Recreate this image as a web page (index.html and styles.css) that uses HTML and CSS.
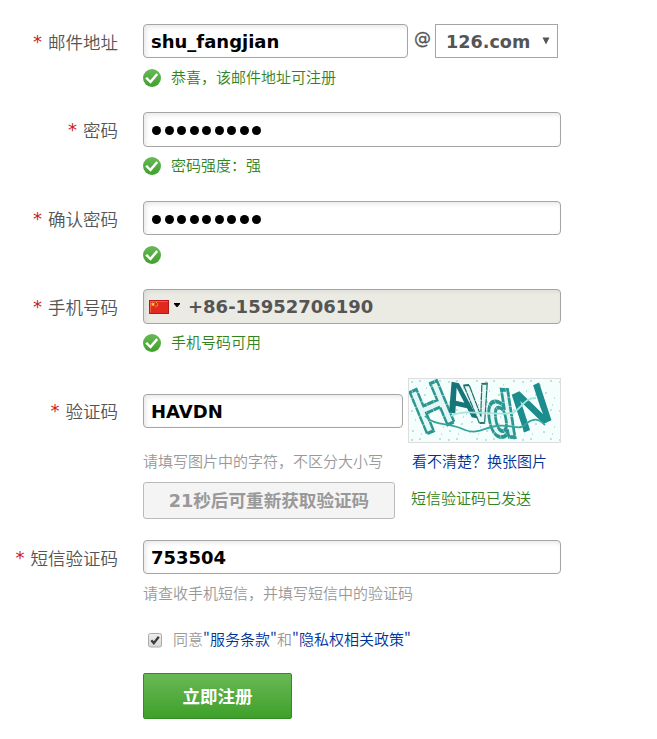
FILE: index.html
```html
<!DOCTYPE html>
<html lang="zh-CN">
<head>
<meta charset="utf-8">
<title>注册</title>
<link rel="stylesheet" href="styles.css">
</head>
<body>
<svg width="0" height="0" class="defs" aria-hidden="true">
  <defs>
    <linearGradient id="ok-fill" x1="0" y1="0" x2="0" y2="1"><stop offset="0" stop-color="#68b957"/><stop offset="1" stop-color="#40a02c"/></linearGradient>
    <symbol id="ok" viewBox="0 0 18 18"><circle cx="9" cy="9" r="9" fill="url(#ok-fill)"/><path d="M2.2 9.6 4.2 7.9 7.2 11.2 13.3 4.3 15.2 5.7 7.6 14.7Z" fill="#fff"/></symbol>
  </defs>
</svg>
<form class="form">
  <div class="row">
    <div class="label"><i>*</i><span>邮件地址</span></div>
    <div class="content">
      <div class="line"><div class="field mail"><span class="value">shu_fangjian</span></div><span class="at">@</span><div class="domain"><span class="value">126.com</span><svg class="arrow" viewBox="0 0 7 8"><path d="M0 .5h7L3.5 7.5Z"/></svg></div></div>
      <div class="hint ok"><svg class="tick"><use href="#ok"/></svg><span>恭喜，该邮件地址可注册</span></div>
    </div>
  </div>
  <div class="row password">
    <div class="label"><i>*</i><span>密码</span></div>
    <div class="content">
      <div class="field"><span class="dots"><b></b><b></b><b></b><b></b><b></b><b></b><b></b><b></b><b></b></span></div>
      <div class="hint ok"><svg class="tick"><use href="#ok"/></svg><span>密码强度：强</span></div>
    </div>
  </div>
  <div class="row confirm">
    <div class="label"><i>*</i><span>确认密码</span></div>
    <div class="content">
      <div class="field"><span class="dots"><b></b><b></b><b></b><b></b><b></b><b></b><b></b><b></b><b></b></span></div>
      <div class="hint ok"><svg class="tick"><use href="#ok"/></svg></div>
    </div>
  </div>
  <div class="row phone">
    <div class="label"><i>*</i><span>手机号码</span></div>
    <div class="content">
      <div class="field tel">
        <svg class="flag" viewBox="0 0 20 14"><rect x=".5" y=".5" width="19" height="13" fill="#e02a20" stroke="#b81818"/><path d="M1.5 1.5h17M1.5 1.5v11" stroke="#f45b46" fill="none"/><path d="M4 2 4.7 3.5 6.3 3.6 5.1 4.6 5.5 6.2 4 5.3 2.5 6.2 2.9 4.6 1.7 3.6 3.3 3.5Z" fill="#ffd735"/><path d="M7 2h1v1H7zM8.2 3.5h1v1h-1zM7.8 5h1v1h-1zM6.5 6.2h1v1h-1z" fill="#f8b52f"/></svg>
        <svg class="caret" viewBox="0 0 6 4"><path d="M0 0h6v1L3.5 4h-1L0 1Z"/></svg>
        <span class="value">+86-15952706190</span>
      </div>
      <div class="hint ok"><svg class="tick"><use href="#ok"/></svg><span>手机号码可用</span></div>
    </div>
  </div>
  <div class="row captcha-row">
    <div class="label"><i>*</i><span>验证码</span></div>
    <div class="content">
      <div class="line captcha-line">
        <div class="field code"><span class="value">HAVDN</span></div>
        <svg class="captcha" viewBox="0 0 153 65">
          <defs>
            <pattern id="specks" width="37" height="29" patternUnits="userSpaceOnUse"><path d="M3 4h2M12 2v2M21 7h1M31 3h2M7 13h1M16 17h2M27 14v2M35 20h1M4 24h2M13 27h1M24 25h2M33 27h1M18 10h1" stroke="#8fc4bf" stroke-width="1"/></pattern>
            <filter id="soft"><feGaussianBlur stdDeviation=".5"/></filter>
          </defs>
          <rect width="153" height="65" fill="#f3fefd"/>
          <rect width="153" height="65" fill="url(#specks)"/>
          <g filter="url(#soft)" class="glyphs">
            <text class="hollow" transform="matrix(.92 -.4 .5 1.2 16 57)">H</text>
            <text class="solid dark" transform="matrix(.86 .19 .24 .96 40 34)">A</text>
            <text class="hollow dark-line" transform="matrix(.72 -.06 .19 1.12 62 46)">V</text>
            <text class="hollow wide" transform="matrix(.92 .04 .2 1.3 82 58)">d</text>
            <text class="solid" transform="matrix(.93 -.42 .36 1.1 113 56)">N</text>
            <path class="thread" d="M17 38C27 49 43 44 57 52c13 5 20-3 32-4 15-2 23 6 30-3 8-6 13-3 18 2"/>
            <path class="thread pale" d="M43 38c15-8 35 0 62-3 11-7 11-15 23-15"/>
          </g>
          <rect x=".5" y=".5" width="152" height="64" fill="none" stroke="#ddd"/>
        </svg>
      </div>
      <div class="captcha-help"><span>请填写图片中的字符，不区分大小写</span><a>看不清楚？换张图片</a></div>
      <div class="sms-line"><div class="resend"><span>21秒后可重新获取验证码</span></div><span class="sent">短信验证码已发送</span></div>
    </div>
  </div>
  <div class="row sms">
    <div class="label"><i>*</i><span>短信验证码</span></div>
    <div class="content">
      <div class="field"><span class="value">753504</span></div>
      <div class="hint">请查收手机短信，并填写短信中的验证码</div>
    </div>
  </div>
  <div class="agreement"><svg class="check" viewBox="0 0 14 15"><defs><linearGradient id="box" x1="0" y1="0" x2="0" y2="1"><stop offset="0" stop-color="#eee"/><stop offset="1" stop-color="#d8d8d8"/></linearGradient></defs><rect x=".5" y=".5" width="13" height="13.5" rx="2" fill="url(#box)" stroke="#aaa"/><path d="m3.3 7.3 2.5 2.8L10.8 3.8" fill="none" stroke="#3c3c3c" stroke-width="2.3"/></svg><span>同意<a><q>"</q>服务条款<q>"</q></a>和<a><q>"</q>隐私权相关政策<q>"</q></a></span></div>
  <button class="submit" type="button"><span>立即注册</span></button>
</form>
</body>
</html>
```
FILE: styles.css
```css
* { box-sizing: border-box; }
body { margin: 0; background: #fff; color: #555; font: 350 15px/20px "Noto Sans CJK SC", sans-serif; }
.defs { display: block; }
svg { display: block; flex: none; }
.form { padding-top: 24px; }
.row { display: grid; grid-template-columns: 118px 418px; column-gap: 25px; height: 88px; }
.confirm { height: 88px; }
.password, .phone { height: 89px; }
.label { display: flex; justify-content: flex-end; gap: 6px; height: 36px; font-size: 17.5px; line-height: 36px; white-space: nowrap; }
.label i { color: #c8201c; font: 18px/36px "DejaVu Sans", sans-serif; }
.field { display: flex; align-items: center; width: 418px; height: 34px; padding: 0 7px; border: 1px solid #a5a5a5; border-radius: 4px; background: #fff; box-shadow: inset 2px 2px 5px #e8e8e8; color: #000; }
.password .field, .phone .field { height: 35px; }
.value { font: bold 18px/30px "DejaVu Sans", sans-serif; white-space: nowrap; }
.field .value { padding-top: 1px; }
.line { display: flex; }
.mail { width: 265px; }
.at { width: 27px; padding-left: 6px; font: 17px/29px "DejaVu Sans", sans-serif; -webkit-text-stroke: .3px #555; }
.domain { display: flex; align-items: center; justify-content: space-between; width: 123px; height: 34px; padding: 0 7px 0 10px; border: 1px solid #a5a5a5; color: #555; }
.domain .value { padding-top: 1px; font-size: 17.6px; }
.arrow { width: 8px; height: 8px; fill: #555; }
.hint { display: flex; align-items: center; gap: 10px; height: 20px; margin-top: 10px; color: #999; white-space: nowrap; }
.hint span { margin-top: -2px; }
.ok { color: #318220; }
.password .hint, .phone .hint { margin-top: 9px; }
.tick { width: 18px; height: 18px; }
.dots { display: flex; gap: 3.5px; padding: 2px 0 0 1px; }
.dots b { width: 9px; height: 9px; border-radius: 50%; background: #000; }
.tel { padding-left: 5px; background: #ebebe4; color: #555; box-shadow: inset 2px 2px 4px #ddddd8; }
.flag { width: 20px; height: 14px; }
.caret { width: 6px; height: 4px; margin: 0 8px 3px 5px; fill: #000; }
.captcha-row { height: 162px; }
.captcha-row .label { margin-top: 15px; }
.captcha-line { height: 65px; gap: 5px; }
.code { width: 260px; margin-top: 16px; }
.captcha { width: 153px; height: 65px; }
.glyphs { font: bold 50px "Liberation Sans", sans-serif; }
.hollow { fill: #e4f7f4; stroke: #2a9691; stroke-width: 2.4; stroke-dasharray: 7 .4; }
.dark-line { stroke: #226f6d; stroke-width: 1.6; }
.wide { stroke-width: 3; }
.solid { fill: #1c8c8c; }
.dark { fill: #147578; }
.thread { fill: none; stroke: #36a49d; stroke-width: 1.8; }
.pale { stroke: #a6e8df; }
.captcha-help { display: flex; gap: 29px; height: 39px; padding-top: 8px; color: #999; white-space: nowrap; }
a { color: #039; }
.sms-line { display: flex; gap: 16px; }
.resend { display: flex; align-items: center; justify-content: center; width: 252px; height: 37px; border: 1px solid #bbb; border-radius: 3px; background: #f4f4f4; color: #999; font: bold 17.6px/30px "DejaVu Sans", "Noto Sans CJK SC", sans-serif; white-space: nowrap; }
.sent { padding-top: 6px; color: #318220; }
.sms { height: 88px; }
.sms .hint { margin-top: 9px; }
.agreement { display: flex; align-items: center; gap: 11px; height: 22px; margin: 1px 0 0 148px; color: #999; white-space: nowrap; }
.agreement span { margin-top: -2px; }
q { quotes: none; letter-spacing: .1px; }
.check { width: 14px; height: 15px; }
.submit { display: block; width: 149px; height: 46px; margin: 22px 0 0 143px; padding: 0; border: 1px solid #338c23; border-radius: 2px; background: linear-gradient(#68b956, #3fa02a); color: #fff; font: bold 17.5px/44px "Noto Sans CJK SC", sans-serif; }
```
